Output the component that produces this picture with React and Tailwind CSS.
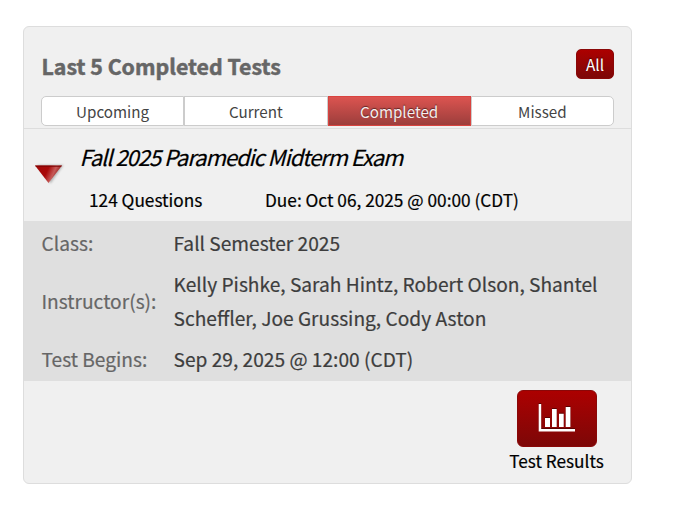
const tabs = ["Upcoming", "Current", "Completed", "Missed"];

function ExpandArrow() {
  return (
    <svg width="32" height="26" viewBox="0 0 32 26">
      <defs>
        <linearGradient id="arrowFill" x1="0" y1="0" x2="1" y2="0.3">
          <stop offset="0" stopColor="#a30808" />
          <stop offset="0.5" stopColor="#a80a0a" />
          <stop offset="0.75" stopColor="#c65a58" />
          <stop offset="1" stopColor="#8a0505" />
        </linearGradient>
        <filter id="arrowShadow" x="-20%" y="-20%" width="150%" height="150%">
          <feGaussianBlur stdDeviation="1.1" />
        </filter>
      </defs>
      <path d="M4 4H30.5L17.5 22.5Z" fill="#777" opacity="0.5" filter="url(#arrowShadow)" />
      <path d="M2 4.5H29L15.5 22Z" fill="url(#arrowFill)" />
      <path d="M2 4.5H29L28 6H3Z" fill="#7a0303" opacity="0.7" />
    </svg>
  );
}

function ChartIcon() {
  const axes = "M0.7 1H3.2V26H37V28.5H0.7Z";
  const bars = "M7 15H12V24H7ZM14 6H18.7V24H14ZM21 10.7H25.7V24H21ZM27.7 4H32.4V24H27.7Z";
  return (
    <svg width="38" height="30" viewBox="0 0 38 30">
      <g fill="#5a0000" transform="translate(0 -1)">
        <path d={axes} />
        <path d={bars} />
      </g>
      <g fill="#fff">
        <path d={axes} />
        <path d={bars} />
      </g>
    </svg>
  );
}

function Tab({ label, index }) {
  const active = label === "Completed";
  const rounding = index === 0 ? "rounded-l-[5px]" : index === 3 ? "rounded-r-[5px]" : "";
  const look = active
    ? "border-[#d9433f] bg-linear-to-b from-[#dc5450] to-[#9c3e3c] text-[#f6eeee] [text-shadow:0_-1px_1px_rgba(0,0,0,0.5)]"
    : "border-[#cccccc] bg-white text-[#444444]";
  return (
    <button className={`h-[30px] flex-1 border text-[15.2px] leading-[28px] ${rounding} ${look}`}>
      {label}
    </button>
  );
}

function DetailRow({ label, children }) {
  return (
    <div className="flex items-center">
      <div className="w-[132px] shrink-0 text-[#666666]">{label}</div>
      <div className="whitespace-pre text-[#3d3d3d]">{children}</div>
    </div>
  );
}

export default function App() {
  return (
    <div className="h-[515px] w-[698px] overflow-hidden bg-white pl-[23px] pt-[26px] font-['Noto_Sans_CJK_SC',sans-serif]">
      <div className="flex h-[458px] w-[609px] flex-col rounded-[6px] border-[1.5px] border-[#dddddd] bg-[#f0f0f0]">
        <div className="h-[102px] border-b-[1.5px] border-[#dddddd] px-[17px] pt-[22px]">
          <div className="flex h-[47px] items-start justify-between">
            <h1 className="pl-[0.5px] text-[21.3px] leading-[33px] font-bold text-[#666666] [-webkit-text-stroke:0.5px_#666666]">
              Last 5 Completed Tests
            </h1>
            <button className="h-[30px] w-[38px] rounded-[5px] border border-[#8a0808] bg-linear-to-b from-[#ac0000] to-[#7d0707] text-[15.4px] leading-[28px] text-white [text-shadow:0_-1px_1px_rgba(0,0,0,0.5)]">
              All
            </button>
          </div>
          <div className="flex">
            {tabs.map((t, i) => (
              <Tab key={t} label={t} index={i} />
            ))}
          </div>
        </div>
        <div className="flex h-[92px] items-start text-black [-webkit-text-stroke:0.2px_#000]">
          <div className="w-[56px] shrink-0 pt-[32px] pl-[9px]">
            <ExpandArrow />
          </div>
          <div>
            <h2 className="-ml-[0.5px] pt-[11px] text-[22px] leading-[32px] tracking-[-1.04px] italic">
              Fall 2025 Paramedic Midterm Exam
            </h2>
            <div className="flex pt-[16px] pl-[9px] text-[17.25px] leading-[24px]">
              <span className="w-[176px]">124 Questions</span>
              <span>Due: Oct 06, 2025 @ 00:00 (CDT)</span>
            </div>
          </div>
        </div>
        <div className="flex h-[160px] flex-col gap-[7px] bg-[#dfdfdf] px-[17.5px] pt-[5px] text-[19.17px] leading-[34px] [-webkit-text-stroke:0.2px]">
          <DetailRow label="Class:">Fall Semester 2025</DetailRow>
          <DetailRow label="Instructor(s):">
            {"Kelly Pishke, Sarah Hintz, Robert Olson, Shantel\nScheffler, Joe Grussing, Cody Aston"}
          </DetailRow>
          <DetailRow label="Test Begins:">Sep 29, 2025 @ 12:00 (CDT)</DetailRow>
        </div>
        <div className="flex flex-col items-end pt-[8.5px] pr-[26.5px]">
          <div className="flex w-[96px] flex-col items-center">
            <button className="flex h-[57px] w-[80px] items-center justify-center rounded-[6px] border border-[#8a0808] bg-linear-to-b from-[#ac0000] to-[#7d0707]">
              <ChartIcon />
            </button>
            <span className="text-[17.2px] leading-[27px] whitespace-nowrap text-black [-webkit-text-stroke:0.2px_#000]">
              Test Results
            </span>
          </div>
        </div>
      </div>
    </div>
  );
}
